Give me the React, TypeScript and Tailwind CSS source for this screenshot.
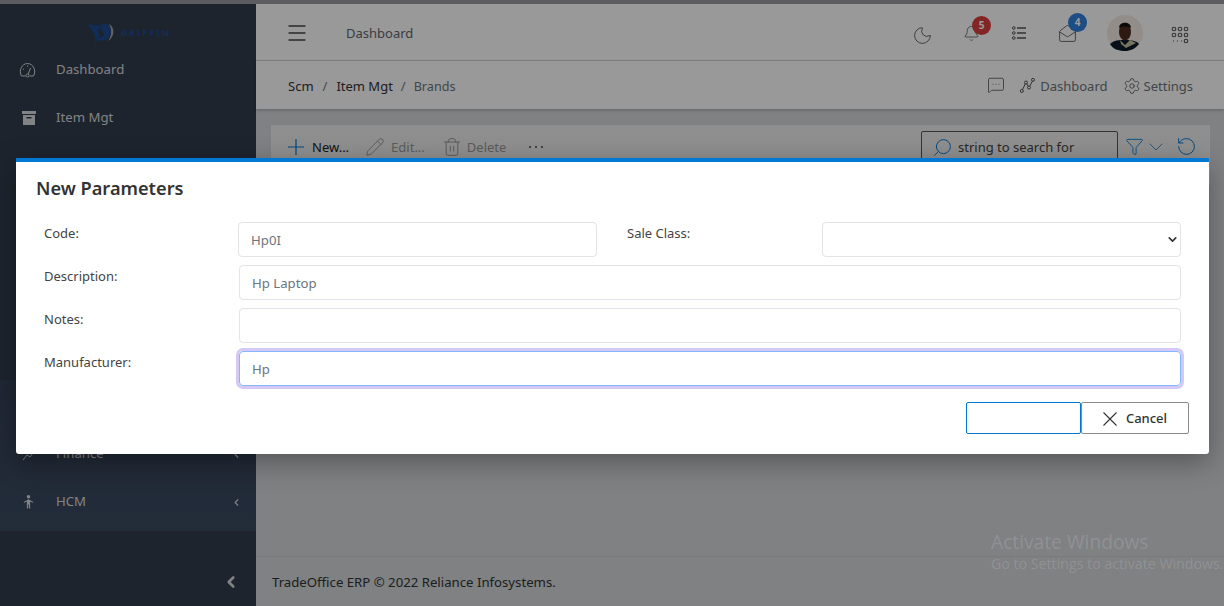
import { ChevronDown, ChevronLeft, Menu, MessageSquareMore, Moon, Pencil, RotateCw, Search, Settings, Trash2, Filter, MailOpen, Bell } from 'lucide-react'

const font = { fontFamily: '"Noto Sans", "Open Sans", sans-serif' }

function Griffin() {
  return (
    <svg width="28" height="20" viewBox="0 0 28 20">
      <path d="M0 1 L13 3 L10 8 L12 13 L9 17 L7 19 L7 12 L4 8 Z" fill="#1d4a8f" />
      <path d="M13 1 C19 -1 23 3 23 8 C23 14 19 18 11 18 C9 18 9 16 11 15 C15 15 17 12 15 9 C13 7 12 4 13 1 Z" fill="#1d4a8f" />
      <path d="M21 1 C27 4 27 14 20 18 C24 13 24 6 21 1 Z" fill="#a5a5a5" />
    </svg>
  )
}

function NavItem({ label, icon, caret }: { label: string; icon: React.ReactNode; caret?: boolean }) {
  return (
    <div className="flex h-12 items-center pl-[20px] pr-[14px] text-[13.2px] text-[#d9dadc]">
      <span className="flex w-9 shrink-0 items-center">{icon}</span>
      <span className="flex-1">{label}</span>
      {caret && <ChevronLeft className="size-[11px] text-[#d9dadc]" strokeWidth={2.5} />}
    </div>
  )
}

function Avatar() {
  return (
    <svg width="36" height="36" viewBox="0 0 36 36">
      <circle cx="18" cy="18" r="18" fill="#f3ebe4" />
      <path d="M3 29 C7 25 12 25 18 25 C25 25 30 26 32 29 C28 34 23 36 18 36 C11 36 6 34 3 29 Z" fill="#0c1c28" />
      <path d="M13 25 L18 30 L23 25 L29 28 L25 30 L19 33 L14 29 Z" fill="#c6c4a0" />
      <ellipse cx="18" cy="17" rx="6" ry="8.500" fill="#4c2d20" />
      <path d="M12 13 C12 6 24 6 24 13 C21 11 15 11 12 13 Z" fill="#14100e" />
    </svg>
  )
}

function Field({ value, focus, className }: { value?: string; focus?: boolean; className?: string }) {
  return (
    <div
      className={`flex h-[35px] items-center rounded-[4px] border px-3 pt-[2px] text-[13.2px] text-[#6c757d] ${
        focus
          ? 'border-[#86b7fe] shadow-[0_0_0_3px_#d4c9f5]'
          : 'border-[#e2e4e7]'
      } ${className ?? ''}`}
    >
      {value}
    </div>
  )
}

export default function App() {
  return (
    <div className="relative h-[606px] w-[1224px] overflow-hidden bg-[#d4d7da]" style={font}>
      <div className="h-1 bg-[#9a9aa0]" />
      <div className="flex h-[602px]">
        {/* Sidebar */}
        <aside className="flex w-64 shrink-0 flex-col bg-[#323c4d]">
          <div className="flex h-[42px] items-center justify-center gap-[5px] pl-[3px] pt-4">
            <Griffin />
            <span className="text-[9px] font-bold tracking-[2px] text-[#1d4a8f]">GRIFFIN</span>
          </div>
          <NavItem
            label="Dashboard"
            icon={
              <svg width="17" height="16" viewBox="0 0 17 16" fill="none" stroke="currentColor" strokeWidth="1" className="-ml-[1px]">
                <path d="M2.500 14 C-0.500 9 2.500 1.500 8.500 1.500 C14.500 1.500 17.500 9 14.500 14 H10.500" />
                <path d="M2.500 14 H6.500" />
                <circle cx="8.500" cy="13.500" r="1.500" />
                <path d="M9.200 12 L11.500 6 M4 7 l1 .6 M8.500 3.500 v1.200" />
              </svg>
            }
          />
          <NavItem
            label="Item Mgt"
            icon={
              <svg width="14" height="14" viewBox="0 0 14 14" className="ml-[2px]" fill="currentColor">
                <path d="M0 0h14v3H0z" />
                <path fillRule="evenodd" d="M1 4h12v10H1zM4.500 6v1.500h5V6z" />
              </svg>
            }
          />
          <div className="h-[238px]" />
          <div className="bg-gradient-to-b from-[#36435a] to-[#3b4a60] pb-[5px] pt-[50px]">
            <NavItem
              label="Finance"
              icon={
                <svg width="14" height="14" viewBox="0 0 14 14" fill="none" stroke="currentColor" strokeWidth="1" className="ml-[2px]">
                  <path d="M1 13 L5 8 L8 10 L13 3" />
                </svg>
              }
              caret
            />
            <NavItem
              label="HCM"
              icon={
                <svg width="13" height="18" viewBox="0 0 16 18" fill="currentColor" className="ml-[2px]">
                  <circle cx="8" cy="2.500" r="2.200" />
                  <path d="M8 5.500 L14 9 L13.400 10 L10 8.500 V17 H8.500 V12 H7.500 V17 H6 V8.500 L2.600 10 L2 9 Z" />
                </svg>
              }
              caret
            />
          </div>
          <div className="flex flex-1 items-center justify-end pr-4 pt-[26px] text-[#d9dadc]">
            <ChevronLeft className="size-[18px]" strokeWidth={3.5} />
          </div>
        </aside>

        {/* Main */}
        <main className="flex min-w-0 flex-1 flex-col">
          <header className="flex h-[57px] items-center border-b border-[#d5d7da] bg-white pl-[29px] pr-[35px] pt-[2px]">
            <Menu className="size-6 text-[#444]" strokeWidth={1.3} />
            <span className="ml-[37px] flex-1 pt-px text-[13px] text-[#5f6770]">Dashboard</span>
            <Moon className="mt-[5px] size-[21px] text-[#555]" strokeWidth={1} />
            <div className="relative ml-[30px]">
              <Bell className="size-[17px] text-[#555]" strokeWidth={1.1} />
              <span className="absolute -top-[9px] left-[9px] flex size-[19px] items-center justify-center rounded-full bg-[#dc3e3e] text-[10px] font-bold text-white">
                5
              </span>
            </div>
            <svg width="14" height="14" viewBox="0 0 14 14" fill="none" stroke="#555" strokeWidth="1" className="ml-8">
              <circle cx="1.800" cy="2" r="1.300" />
              <circle cx="1.800" cy="7" r="1.300" />
              <circle cx="1.800" cy="12" r="1.300" />
              <path d="M5 2h9M5 7h9M5 12h9" strokeWidth="1.300" />
            </svg>
            <div className="relative ml-8">
              <MailOpen className="size-[19px] text-[#555]" strokeWidth={1.1} />
              <span className="absolute -top-[11px] left-[10px] flex size-[19px] items-center justify-center rounded-full bg-[#2f80dc] text-[10px] font-bold text-white">
                4
              </span>
            </div>
            <div className="ml-[30px]">
              <Avatar />
            </div>
            <svg width="18" height="18" viewBox="0 0 18 18" fill="none" stroke="#555" strokeWidth="1.100" className="ml-7 mt-[3px]">
              <circle cx="3" cy="3" r="1.800" />
              <circle cx="9" cy="3" r="1.800" />
              <circle cx="15" cy="3" r="1.800" />
              <circle cx="3" cy="9" r="1.800" />
              <circle cx="9" cy="9" r="1.800" />
              <circle cx="15" cy="9" r="1.800" />
              <circle cx="15" cy="15" r="1.800" />
              <path d="M2 15h1M6 15h1M10 15h1" />
            </svg>
          </header>

          <div className="flex h-12 items-center bg-white pl-8 pr-[31px] pt-[3px] text-[13px] shadow-[0_1px_3px_rgba(0,0,0,0.25)]">
            <span className="text-[#333]">Scm</span>
            <span className="mx-[9px] text-[#777]">/</span>
            <span className="text-[#333]">Item Mgt</span>
            <span className="mx-2 text-[#777]">/</span>
            <span className="flex-1 pt-px text-[12.6px] text-[#6c757d]">Brands</span>
            <MessageSquareMore className="-mt-[3px] size-[18px] text-[#555]" strokeWidth={1.1} />
            <svg width="15" height="15" viewBox="0 0 15 15" fill="none" stroke="#555" strokeWidth="1" className="ml-[15px] -mt-[2px]">
              <circle cx="1.800" cy="13" r="1.500" />
              <circle cx="6" cy="4.500" r="1.500" />
              <circle cx="9" cy="9.500" r="1.500" />
              <circle cx="13" cy="1.800" r="1.500" />
              <path d="M2.500 11.700 L5.300 5.800 M6.800 5.800 L8.200 8.200 M9.700 8.200 L12.400 3.200" />
            </svg>
            <span className="ml-[5px] text-[#6c757d]">Dashboard</span>
            <Settings className="ml-[15px] -mt-[2px] size-[18px] text-[#555]" strokeWidth={1.1} />
            <span className="ml-[3px] text-[#6c757d]">Settings</span>
          </div>

          <div className="flex-1 px-[14px] pt-4">
            <div className="ml-px flex h-[60px] items-start bg-[#eeeff0] pl-[17px] pr-[13px] pt-[6px] text-[13px]">
              <div className="flex h-8 flex-1 items-center">
                <svg width="16" height="16" viewBox="0 0 16 16" stroke="#0078d4" strokeWidth="1.200">
                  <path d="M8 0v16M0 8h16" />
                </svg>
                <span className="ml-2 pt-[2px] text-[#222]">New...</span>
                <Pencil className="ml-4 size-5 text-[#888]" strokeWidth={1} />
                <span className="ml-[6px] pt-[2px] text-[#999]">Edit...</span>
                <Trash2 className="ml-[17px] size-5 text-[#888]" strokeWidth={1} />
                <span className="ml-[5px] pt-[2px] text-[#999]">Delete</span>
                <svg width="16" height="4" viewBox="0 0 16 4" fill="#444" className="ml-[22px]">
                  <circle cx="2" cy="2" r="1" />
                  <circle cx="8" cy="2" r="1" />
                  <circle cx="14" cy="2" r="1" />
                </svg>
              </div>
              <div className="flex h-[34px] w-[197px] items-start rounded-[2px] border border-[#555] pl-[10px] text-[#444]">
                <div className="flex h-[30px] items-center gap-[5px]">
                  <Search className="size-[21px] -scale-x-100 text-[#0078d4]" strokeWidth={1.1} />
                  <span className="pt-[2px]">string to search for</span>
                </div>
              </div>
              <Filter className="ml-[7px] mt-[6px] size-[19px] text-[#0078d4]" strokeWidth={1.1} />
              <ChevronDown className="mt-1 size-6 text-[#4a90c8]" strokeWidth={1} />
              <RotateCw className="ml-2 mt-[5px] size-[21px] -scale-x-100 text-[#0078d4]" strokeWidth={1.1} />
            </div>
          </div>

          <footer className="flex h-[50px] items-center border-t border-[#c8cbce] px-4 pt-[2px] text-[13.2px] text-[#333]">
            TradeOffice ERP © 2022 Reliance Infosystems.
          </footer>
        </main>
      </div>

      {/* Backdrop */}
      <div className="absolute inset-0 bg-black/40" />

      {/* Windows watermark */}
      <div className="absolute left-[991px] top-[530px] whitespace-nowrap text-white/15" style={{ fontFamily: '"Open Sans", sans-serif' }}>
        <div className="text-[19.2px] leading-[24px]">Activate Windows</div>
        <div className="text-[14.200px] leading-[20px]">Go to Settings to activate Windows.</div>
      </div>

      {/* Modal */}
      <div className="absolute left-4 top-[158px] h-[296px] w-[1193px] rounded-b-[3px] border-t-4 border-[#0078d4] bg-white shadow-[0_8px_28px_rgba(0,0,0,0.35)]">
        <div className="px-5 pt-[14px] text-[18.2px] font-semibold leading-[24px] text-[#333]">New Parameters</div>
        <div className="mt-[22px] flex flex-col gap-2 px-7 text-[13px] text-[#444]">
          <div className="flex">
            <label className="w-[194px] pt-[2px]">Code:</label>
            <Field value="Hp0I" className="w-[359px]" />
            <label className="ml-[30px] w-[195px] pt-[2px]">Sale Class:</label>
            <div className="flex h-[35px] w-[359px] items-center justify-end rounded-[4px] border border-[#e2e4e7] pr-px">
              <ChevronDown className="size-[13px] text-[#333]" strokeWidth={3} />
            </div>
          </div>
          <div className="flex">
            <label className="w-[195px] pt-[2px]">Description:</label>
            <Field value="Hp Laptop" className="flex-1" />
          </div>
          <div className="flex">
            <label className="w-[195px] pt-[2px]">Notes:</label>
            <Field className="flex-1" />
          </div>
          <div className="flex">
            <label className="w-[195px] pt-[2px]">Manufacturer:</label>
            <Field value="Hp" focus className="flex-1" />
          </div>
        </div>
        <div className="mt-4 flex justify-end pr-5">
          <div className="h-8 w-[115px] rounded-[2px] border border-[#0078d4]" />
          <div className="flex h-8 w-[108px] items-center justify-center gap-[9px] rounded-[2px] border border-[#8a8a8a] pt-px text-[13px] font-medium text-[#333]">
            <svg width="14" height="14" viewBox="0 0 14 14" stroke="#333" strokeWidth="1.100">
              <path d="M0.500 0.500 L13.500 13.500 M13.500 0.500 L0.500 13.500" />
            </svg>
            Cancel
          </div>
        </div>
      </div>
    </div>
  )
}
